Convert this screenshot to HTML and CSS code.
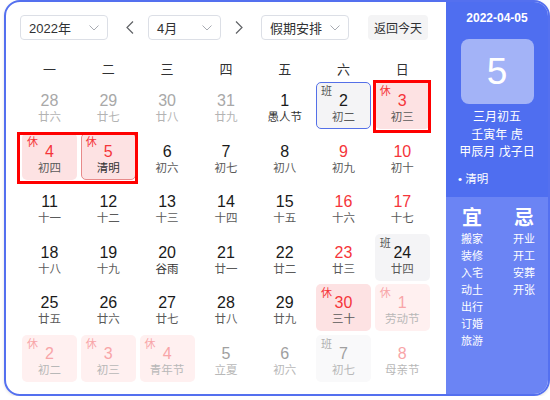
FILE: index.html
```html
<!DOCTYPE html>
<html lang="zh-CN">
<head>
<meta charset="utf-8">
<title>日历</title>
<link rel="stylesheet" href="styles.css">
</head>
<body>
<div class="cal">
  <div class="main">
    <div class="toolbar">
      <div class="select w88"><span>2022年</span><svg class="chev" viewBox="0 0 10 6" width="10" height="6"><path d="M0.5 0.5 L5 5 L9.5 0.5" fill="none" stroke="#a8abb2" stroke-width="1"/></svg></div>
      <svg class="arrow left" viewBox="0 0 8 13" width="8" height="13"><path d="M7 0.5 L1 6.5 L7 12.5" fill="none" stroke="#606266" stroke-width="1.2"/></svg>
      <div class="select w73"><span>4月</span><svg class="chev" viewBox="0 0 10 6" width="10" height="6"><path d="M0.5 0.5 L5 5 L9.5 0.5" fill="none" stroke="#a8abb2" stroke-width="1"/></svg></div>
      <svg class="arrow right" viewBox="0 0 8 13" width="8" height="13"><path d="M1 0.5 L7 6.5 L1 12.5" fill="none" stroke="#606266" stroke-width="1.2"/></svg>
      <div class="select w88"><span>假期安排</span><svg class="chev" viewBox="0 0 10 6" width="10" height="6"><path d="M0.5 0.5 L5 5 L9.5 0.5" fill="none" stroke="#a8abb2" stroke-width="1"/></svg></div>
      <div class="btn">返回今天</div>
    </div>
    <div class="weekdays">
      <span>一</span><span>二</span><span>三</span><span>四</span><span>五</span><span>六</span><span>日</span>
    </div>
    <div class="grid-wrap">
      <div class="grid">
        <div class="cell prev"><b>28</b><i>廿六</i></div>
        <div class="cell prev"><b>29</b><i>廿七</i></div>
        <div class="cell prev"><b>30</b><i>廿八</i></div>
        <div class="cell prev"><b>31</b><i>廿九</i></div>
        <div class="cell"><b>1</b><i class="dark">愚人节</i></div>
        <div class="cell work sel"><em>班</em><b>2</b><i>初二</i></div>
        <div class="cell rest"><em>休</em><b>3</b><i>初三</i></div>

        <div class="cell rest"><em>休</em><b>4</b><i>初四</i></div>
        <div class="cell rest today"><em>休</em><b>5</b><i class="dark">清明</i></div>
        <div class="cell"><b>6</b><i>初六</i></div>
        <div class="cell"><b>7</b><i>初七</i></div>
        <div class="cell"><b>8</b><i>初八</i></div>
        <div class="cell wk"><b>9</b><i>初九</i></div>
        <div class="cell wk"><b>10</b><i>初十</i></div>

        <div class="cell"><b>11</b><i>十一</i></div>
        <div class="cell"><b>12</b><i>十二</i></div>
        <div class="cell"><b>13</b><i>十三</i></div>
        <div class="cell"><b>14</b><i>十四</i></div>
        <div class="cell"><b>15</b><i>十五</i></div>
        <div class="cell wk"><b>16</b><i>十六</i></div>
        <div class="cell wk"><b>17</b><i>十七</i></div>

        <div class="cell"><b>18</b><i>十八</i></div>
        <div class="cell"><b>19</b><i>十九</i></div>
        <div class="cell"><b>20</b><i class="dark">谷雨</i></div>
        <div class="cell"><b>21</b><i>廿一</i></div>
        <div class="cell"><b>22</b><i>廿二</i></div>
        <div class="cell wk"><b>23</b><i>廿三</i></div>
        <div class="cell work"><em>班</em><b>24</b><i>廿四</i></div>

        <div class="cell"><b>25</b><i>廿五</i></div>
        <div class="cell"><b>26</b><i>廿六</i></div>
        <div class="cell"><b>27</b><i>廿七</i></div>
        <div class="cell"><b>28</b><i>廿八</i></div>
        <div class="cell"><b>29</b><i>廿九</i></div>
        <div class="cell rest"><em>休</em><b>30</b><i>三十</i></div>
        <div class="cell next rest"><em>休</em><b>1</b><i>劳动节</i></div>

        <div class="cell next rest"><em>休</em><b>2</b><i>初二</i></div>
        <div class="cell next rest"><em>休</em><b>3</b><i>初三</i></div>
        <div class="cell next rest"><em>休</em><b>4</b><i>青年节</i></div>
        <div class="cell next"><b>5</b><i>立夏</i></div>
        <div class="cell next"><b>6</b><i>初六</i></div>
        <div class="cell next work"><em>班</em><b>7</b><i>初七</i></div>
        <div class="cell next wk"><b>8</b><i>母亲节</i></div>
      </div>
      <div class="mark mark-a"></div>
      <div class="mark mark-b"></div>
    </div>
  </div>
  <div class="panel">
    <div class="panel-top">
      <div class="p-date">2022-04-05</div>
      <div class="p-day">5</div>
      <div class="p-line first">三月初五</div>
      <div class="p-line">壬寅年 虎</div>
      <div class="p-line">甲辰月 戊子日</div>
      <div class="p-term">• 清明</div>
    </div>
    <div class="panel-bottom">
      <div class="yj">
        <div class="yj-col">
          <div class="yj-head">宜</div>
          <div>搬家</div><div>装修</div><div>入宅</div><div>动土</div><div>出行</div><div>订婚</div><div>旅游</div>
        </div>
        <div class="yj-col">
          <div class="yj-head">忌</div>
          <div>开业</div><div>开工</div><div>安葬</div><div>开张</div>
        </div>
      </div>
    </div>
  </div>
</div>
</body>
</html>
```
FILE: styles.css
```css
* { box-sizing: border-box; }
html, body { margin: 0; padding: 0; background: #fff; }
body {
  font-family: "Liberation Sans", "Noto Sans CJK SC", sans-serif;
  color: #303133;
}
.cal {
  margin-left: 4px;
  width: 546px;
  height: 396px;
  border: 2px solid #5470ef;
  border-radius: 16px;
  overflow: hidden;
  display: flex;
  box-shadow: 0 1px 3px rgba(0,0,0,0.12);
}
.main {
  width: 440px;
  padding: 13px 0 0 14px;
}
.toolbar {
  display: flex;
  align-items: center;
  height: 25px;
}
.select {
  height: 25px;
  border: 1px solid #dcdfe6;
  border-radius: 4px;
  display: flex;
  align-items: center;
  justify-content: space-between;
  padding: 0 8px 0 8px;
  font-size: 13px;
  color: #303133;
}
.w88 { width: 88px; }
.w73 { width: 73px; }
.arrow.left { margin: 0 14px 0 18px; }
.arrow.right { margin: 0 18px 0 14px; }
.btn {
  margin-left: 19px;
  width: 60px;
  height: 25px;
  border-radius: 4px;
  background: #f4f4f5;
  font-size: 12px;
  color: #303133;
  display: flex;
  align-items: center;
  justify-content: center;
}
.weekdays {
  margin: 14px 0 0 2px;
  height: 28px;
  width: 408px;
  display: grid;
  grid-template-columns: repeat(7, 55px);
  column-gap: 3.8px;
  align-items: center;
  font-size: 13px;
  color: #303133;
}
.weekdays span { text-align: center; }
.grid-wrap {
  position: relative;
  margin-left: 2px;
  width: 408px;
}
.grid {
  display: grid;
  grid-template-columns: repeat(7, 55px);
  grid-auto-rows: 47px;
  column-gap: 3.8px;
  row-gap: 3.6px;
}
.cell {
  position: relative;
  border-radius: 5px;
  display: flex;
  flex-direction: column;
  align-items: center;
  padding-top: 8px;
  border: 1px solid transparent;
}
.cell b {
  font-weight: normal;
  font-size: 16px;
  line-height: 19px;
  color: #1a1a1a;
}
.cell i {
  font-style: normal;
  font-size: 11.5px;
  line-height: 14px;
  color: #5a5a5a;
}
.cell i.dark { color: #333; }
.cell em {
  position: absolute;
  left: 4px;
  top: 1px;
  font-style: normal;
  font-size: 11px;
  line-height: 14px;
}
.cell.prev b { color: #a8a8a8; }
.cell.prev i { color: #b3b3b3; }
.cell.wk b { color: #f5353a; }
.cell.rest { background: #fde2e3; }
.cell.rest b { color: #f5353a; }
.cell.rest em { color: #f5353a; }
.cell.work { background: #f4f4f6; }
.cell.work em { color: #555; }
.cell.sel { border-color: #5470e8; }
.cell.today { border-color: #e88a8a; }
.cell.next b { color: #a0a0a0; }
.cell.next i { color: #b8b8b8; }
.cell.next.rest { background: #fff0f0; }
.cell.next.rest b, .cell.next.rest em { color: #f8a5a8; }
.cell.next.work { background: #f9f9fa; }
.cell.next.work em { color: #b0b0b0; }
.cell.next.wk b { color: #f8a5a8; }
.mark {
  position: absolute;
  border: 3px solid #ff0000;
  pointer-events: none;
}
.mark-a { left: -5px; top: 50px; width: 121px; height: 52px; }
.mark-b { left: 351px; top: -2px; width: 58px; height: 53px; }

.panel {
  width: 102px;
  display: flex;
  flex-direction: column;
  color: #fff;
}
.panel-top {
  height: 195px;
  background: #4f6ef0;
  display: flex;
  flex-direction: column;
  align-items: center;
  padding-top: 7px;
}
.p-date {
  font-size: 12px;
  font-weight: bold;
  line-height: 18px;
}
.p-day {
  margin-top: 12px;
  width: 73px;
  height: 65px;
  border-radius: 8px;
  background: rgba(255,255,255,0.48);
  display: flex;
  align-items: center;
  justify-content: center;
  font-size: 37px;
}
.p-line {
  font-size: 12px;
  line-height: 17.5px;
}
.p-line.first { margin-top: 5px; }
.p-term {
  align-self: flex-start;
  margin: 9px 0 0 12px;
  font-size: 11.5px;
  line-height: 17px;
}
.panel-bottom {
  flex: 1;
  background: #6b84f4;
  padding-top: 8px;
}
.yj {
  display: flex;
  justify-content: space-between;
  padding: 0 13px 0 15px;
}
.yj-col {
  display: flex;
  flex-direction: column;
  align-items: center;
  font-size: 11px;
  line-height: 17px;
}
.yj-head {
  font-size: 20px;
  font-weight: bold;
  line-height: 26px;
}
```
